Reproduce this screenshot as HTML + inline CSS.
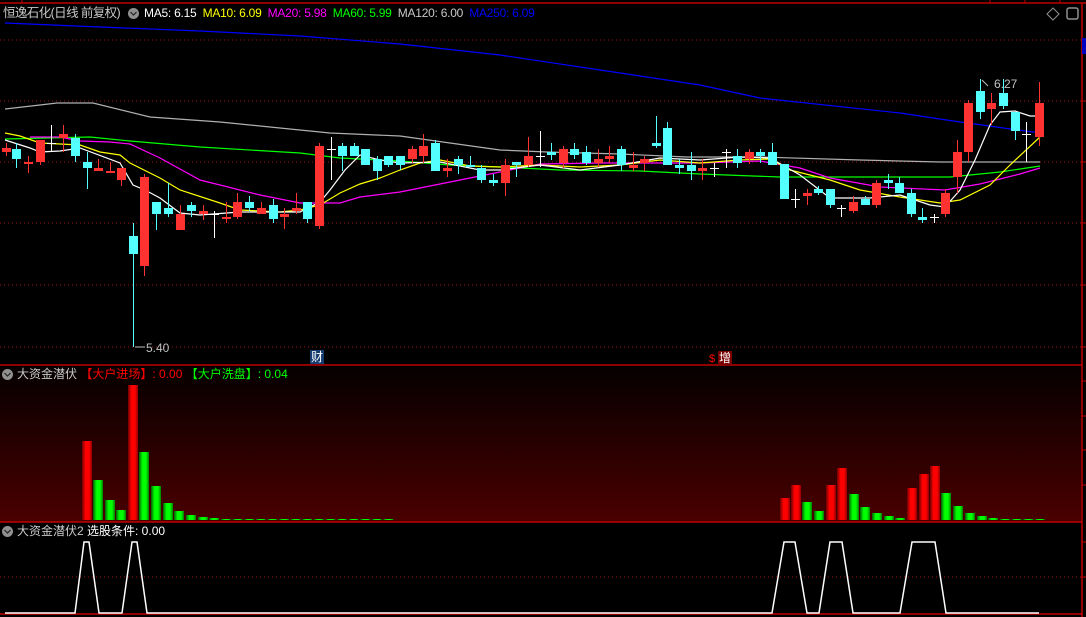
<!DOCTYPE html>
<html><head><meta charset="utf-8"><style>
html,body{margin:0;padding:0;background:#000;}
#w{position:relative;width:1086px;height:617px;overflow:hidden;background:#000;font-family:"Liberation Sans","Noto Sans CJK SC",sans-serif;}
.t{position:absolute;font-size:12px;white-space:nowrap;line-height:14px;}
svg{position:absolute;left:0;top:0;}
</style></head><body><div id="w">
<svg id="s" width="1086" height="617" xmlns="http://www.w3.org/2000/svg">
<defs>
<linearGradient id="bg" x1="0" y1="0" x2="0" y2="1"><stop offset="0" stop-color="#050000"/><stop offset="1" stop-color="#4a0000"/></linearGradient>
<linearGradient id="rg" x1="0" y1="0" x2="1" y2="0"><stop offset="0" stop-color="#700000"/><stop offset="0.35" stop-color="#ff0000"/><stop offset="0.7" stop-color="#ff0000"/><stop offset="1" stop-color="#900000"/></linearGradient>
<linearGradient id="gg" x1="0" y1="0" x2="1" y2="0"><stop offset="0" stop-color="#006000"/><stop offset="0.35" stop-color="#00ff00"/><stop offset="0.7" stop-color="#00ff00"/><stop offset="1" stop-color="#008000"/></linearGradient>
</defs>
<rect x="0" y="366" width="1081" height="156" fill="url(#bg)"/>
<g stroke="#c00000" stroke-width="1.5">
<line x1="0" y1="3" x2="1086" y2="3"/>
<line x1="0" y1="365" x2="1082" y2="365"/>
<line x1="0" y1="522" x2="1082" y2="522"/>
<line x1="0" y1="614" x2="1082" y2="614"/>
<line x1="1082" y1="3" x2="1082" y2="617"/>
</g>
<g stroke="#c00000" stroke-width="1"><line x1="22" y1="0" x2="22" y2="3"/><line x1="990" y1="0" x2="990" y2="3"/><line x1="1025" y1="0" x2="1025" y2="3"/><line x1="1060" y1="0" x2="1060" y2="3"/>
<line x1="1082" y1="40" x2="1086" y2="40"/><line x1="1082" y1="101" x2="1086" y2="101"/><line x1="1082" y1="162" x2="1086" y2="162"/><line x1="1082" y1="223" x2="1086" y2="223"/><line x1="1082" y1="285" x2="1086" y2="285"/><line x1="1082" y1="347" x2="1086" y2="347"/>
<line x1="1082" y1="381" x2="1086" y2="381"/><line x1="1082" y1="416" x2="1086" y2="416"/><line x1="1082" y1="450" x2="1086" y2="450"/><line x1="1082" y1="485" x2="1086" y2="485"/>
<line x1="1082" y1="542" x2="1086" y2="542"/><line x1="1082" y1="577" x2="1086" y2="577"/></g>
<g stroke="#a01010" stroke-width="1" stroke-dasharray="1,3">
<line x1="0" y1="40" x2="1081" y2="40"/><line x1="0" y1="101" x2="1081" y2="101"/><line x1="0" y1="162" x2="1081" y2="162"/><line x1="0" y1="223" x2="1081" y2="223"/><line x1="0" y1="285" x2="1081" y2="285"/><line x1="0" y1="347" x2="1081" y2="347"/><line x1="0" y1="577" x2="1081" y2="577"/>
</g>
<rect x="1082" y="38" width="4" height="16" fill="#0000c0"/>
<g fill="none" stroke-width="1.2">
<polyline stroke="#0000ff" points="5,23 100,27 200,31 300,36 400,44 500,55 600,70 700,85 760,98 900,113 960,122 1040,133"/>
<polyline stroke="#b0b0b0" points="5,109 40,105 57,103 93,103 150,117 220,122 270,127 330,133 400,136 500,150 547,152 620,154 687,157 760,157 860,160 940,162 1040,162"/>
<polyline stroke="#00ff00" points="5,139 90,137 130,141 200,147 300,153 340,158 400,161 450,165 500,167 560,170 640,171 700,174 780,177 950,177 1000,172 1040,166"/>
<polyline stroke="#ff00ff" points="30,137 60,137 80,141 110,142 130,144 160,158 200,180 260,195 300,203 340,203 360,197 400,192 450,182 500,172 540,164 600,163 700,163 760,161 800,168 830,178 880,187 945,190 980,184 1020,174 1040,168"/>
<polyline stroke="#ffff00" points="5,133 20,136 40,143 80,145 100,152 120,155 130,163 160,178 180,190 220,203 240,210 280,212 300,210 320,205 340,193 360,184 380,178 400,170 420,163 440,160 470,166 500,167 540,165 580,167 620,165 660,160 700,163 740,160 770,159 790,170 830,180 860,190 900,197 940,203 960,200 990,185 1010,165 1040,137"/>
<polyline stroke="#ffffff" points="5,140 30,148 40,152 60,151 80,148 120,163 133,185 145,190 160,198 180,213 200,215 240,212 300,212 320,202 330,190 345,170 360,155 380,160 400,163 440,162 480,170 500,170 540,165 580,170 620,165 660,158 700,160 740,157 770,158 800,175 830,198 870,198 900,195 930,205 945,207 960,190 975,160 990,125 1000,112 1015,111 1030,116 1040,116"/>
<polyline stroke="#ffffff" stroke-width="1.5" points="5,613 75,613 84,542 89,542 99,613 122,613 132,542 137,542 147,613 772,613 784,542 795,542 807,613 819,613 830,542 842,542 853,613 900,613 912,542 935,542 946,613 1039,613"/>
</g>
<g id="c"></g>
<g id="b"></g>
<polyline points="135,347 145,347" stroke="#c0c0c0" fill="none"/>
<polyline points="982,80 988,86" stroke="#c0c0c0" fill="none"/>
<rect x="310" y="350" width="14" height="14" fill="#143c6e"/>
<rect x="718" y="351" width="14" height="14" fill="#7a0000"/>
<path d="M1053,8 L1059,14 L1053,20 L1047,14 Z" fill="none" stroke="#909090"/>
<rect x="1067" y="8" width="11" height="11" rx="2" fill="none" stroke="#909090" stroke-width="1.5"/>
<circle cx="133.5" cy="13.5" r="5.5" fill="#909090"/><path d="M130.5,12 L133.5,15 L136.5,12" stroke="#222" fill="none" stroke-width="1.2"/>
<circle cx="7.5" cy="374.5" r="5.5" fill="#909090"/><path d="M4.5,373 L7.5,376 L10.5,373" stroke="#222" fill="none" stroke-width="1.2"/>
<circle cx="7.5" cy="531.5" r="5.5" fill="#909090"/><path d="M4.5,530 L7.5,533 L10.5,530" stroke="#222" fill="none" stroke-width="1.2"/>
</svg>
<div class="t" style="left:3px;top:6px;color:#c8c8c8;font-size:12.5px;letter-spacing:-0.6px">恒逸石化(日线 前复权)</div>
<div class="t" style="left:144px;top:6px;font-size:12px;letter-spacing:-0.25px"><span style="color:#fff">MA5: 6.15</span>&nbsp; <span style="color:#ff0">MA10: 6.09</span>&nbsp; <span style="color:#f0f">MA20: 5.98</span>&nbsp; <span style="color:#0f0">MA60: 5.99</span>&nbsp; <span style="color:#c8c8c8">MA120: 6.00</span>&nbsp; <span style="color:#00f">MA250: 6.09</span></div>
<div class="t" style="left:146px;top:341px;color:#c0c0c0">5.40</div>
<div class="t" style="left:994px;top:77px;color:#c0c0c0">6.27</div>
<div class="t" style="left:311px;top:350px;color:#fff">财</div>
<div class="t" style="left:719px;top:351px;color:#fff">增</div>
<div class="t" style="left:709px;top:352px;color:#f00;font-size:11px">$</div>
<div class="t" style="left:17px;top:367px;color:#c8c8c8">大资金潜伏 <span style="color:#f00">【大户进场】: 0.00</span> <span style="color:#0f0">【大户洗盘】: 0.04</span></div>
<div class="t" style="left:17px;top:524px;color:#c8c8c8">大资金潜伏2 <span style="color:#fff">选股条件: 0.00</span></div>
<script>
var C=[[6,148,152,143,156,'r'],[16,149,159,143,168,'c'],[28,162,164,156,173,'r'],[40,140,162,140,165,'r'],[51,143,143,125,152,'w'],[63,134,138,125,152,'r'],[75,138,156,134,162,'c'],[87,162,168,152,189,'c'],[98,168,171,159,171,'r'],[110,171,173,162,173,'r'],[121,168,180,168,186,'r'],[133,236,254,223,347,'c'],[144,177,266,174,276,'r'],[156,202,214,202,230,'c'],[168,208,214,183,217,'c'],[180,214,230,205,230,'r'],[191,205,211,202,217,'c'],[203,211,214,205,220,'r'],[214,214,214,211,238,'w'],[226,217,219,202,223,'r'],[237,202,217,193,219,'r'],[249,202,208,196,211,'c'],[261,208,214,202,214,'r'],[273,205,219,199,223,'c'],[284,214,217,208,229,'r'],[296,208,211,193,214,'r'],[307,202,219,202,223,'c'],[319,146,226,143,229,'r'],[331,149,149,137,180,'w'],[342,146,156,143,171,'c'],[354,146,156,143,156,'c'],[365,149,165,149,165,'c'],[377,159,171,156,180,'c'],[388,156,165,156,167,'c'],[400,156,165,156,170,'c'],[412,149,159,146,163,'r'],[423,146,156,134,163,'r'],[435,143,171,140,171,'c'],[447,168,171,159,177,'r'],[458,159,165,156,174,'c'],[470,165,167,156,167,'c'],[481,168,180,165,183,'c'],[493,180,183,174,186,'c'],[505,165,183,159,196,'r'],[516,162,165,162,177,'c'],[528,156,165,137,167,'r'],[540,156,156,131,167,'w'],[551,152,155,143,160,'c'],[563,149,163,146,168,'r'],[574,149,155,143,159,'c'],[586,152,163,146,165,'c'],[598,159,163,149,167,'r'],[609,156,159,146,163,'r'],[621,149,165,146,171,'c'],[633,165,168,152,171,'r'],[644,159,163,156,171,'r'],[656,143,146,116,148,'c'],[667,128,165,122,165,'c'],[679,165,168,159,174,'c'],[691,165,171,152,180,'c'],[702,168,171,159,180,'r'],[714,168,168,163,177,'w'],[726,152,152,149,168,'w'],[737,156,163,149,168,'c'],[749,152,159,149,164,'r'],[760,152,156,149,163,'c'],[772,152,165,143,165,'c'],[784,164,199,164,199,'c'],[795,199,199,189,208,'w'],[807,193,196,189,205,'r'],[818,189,193,186,195,'c'],[830,189,205,189,208,'c'],[841,208,208,205,217,'w'],[853,202,211,196,213,'r'],[865,199,205,196,205,'c'],[876,183,205,180,208,'r'],[888,180,183,174,189,'c'],[899,183,193,177,193,'c'],[911,193,214,189,217,'c'],[922,217,220,208,223,'c'],[934,217,217,214,223,'w'],[945,193,214,189,217,'r'],[957,152,177,140,193,'r'],[968,103,152,100,162,'r'],[980,91,112,79,119,'c'],[991,103,109,93,125,'r'],[1003,93,106,79,109,'c'],[1015,112,131,112,140,'c'],[1026,134,134,122,162,'w'],[1039,103,137,82,146,'r']];
var col={r:'#ff3232',c:'#54ffff',w:'#ffffff'},h='';
C.forEach(function(d){var x=d[0],k=col[d[5]];h+='<line x1="'+(x+.5)+'" y1="'+d[3]+'" x2="'+(x+.5)+'" y2="'+d[4]+'" stroke="'+k+'"/>';
if(d[5]=='w'){h+='<line x1="'+(x-4)+'" y1="'+(d[1]+.5)+'" x2="'+(x+5)+'" y2="'+(d[1]+.5)+'" stroke="#fff"/>';}
else{h+='<rect x="'+(x-4)+'" y="'+d[1]+'" width="9" height="'+Math.max(2,d[2]-d[1])+'" fill="'+k+'"/>';}});
document.getElementById('c').innerHTML=h;
var B=[[82,441,'r'],[93,480,'g'],[105,500,'g'],[116,510,'g'],[128,385,'r'],[139,452,'g'],[151,486,'g'],[163,503,'g'],[174,511,'g'],[186,515,'g'],[198,517,'g'],[209,518,'g'],[780,498,'r'],[791,485,'r'],[802,502,'g'],[814,511,'g'],[826,485,'r'],[837,468,'r'],[849,494,'g'],[860,507,'g'],[872,513,'g'],[884,516,'g'],[895,518,'g'],[907,488,'r'],[919,474,'r'],[930,466,'r'],[941,493,'g'],[953,506,'g'],[965,513,'g'],[977,516,'g'],[988,518,'g']];
for(var x=221;x<390;x+=11.6)B.push([x,519,'g']);
for(var x=1000;x<1045;x+=11.6)B.push([x,519,'g']);
h='';B.forEach(function(b){h+='<rect x="'+b[0]+'" y="'+b[1]+'" width="10" height="'+(520-b[1])+'" fill="url(#'+(b[2]=='r'?'rg':'gg')+')"/>';});
document.getElementById('b').innerHTML=h;
</script>
</div></body></html>
